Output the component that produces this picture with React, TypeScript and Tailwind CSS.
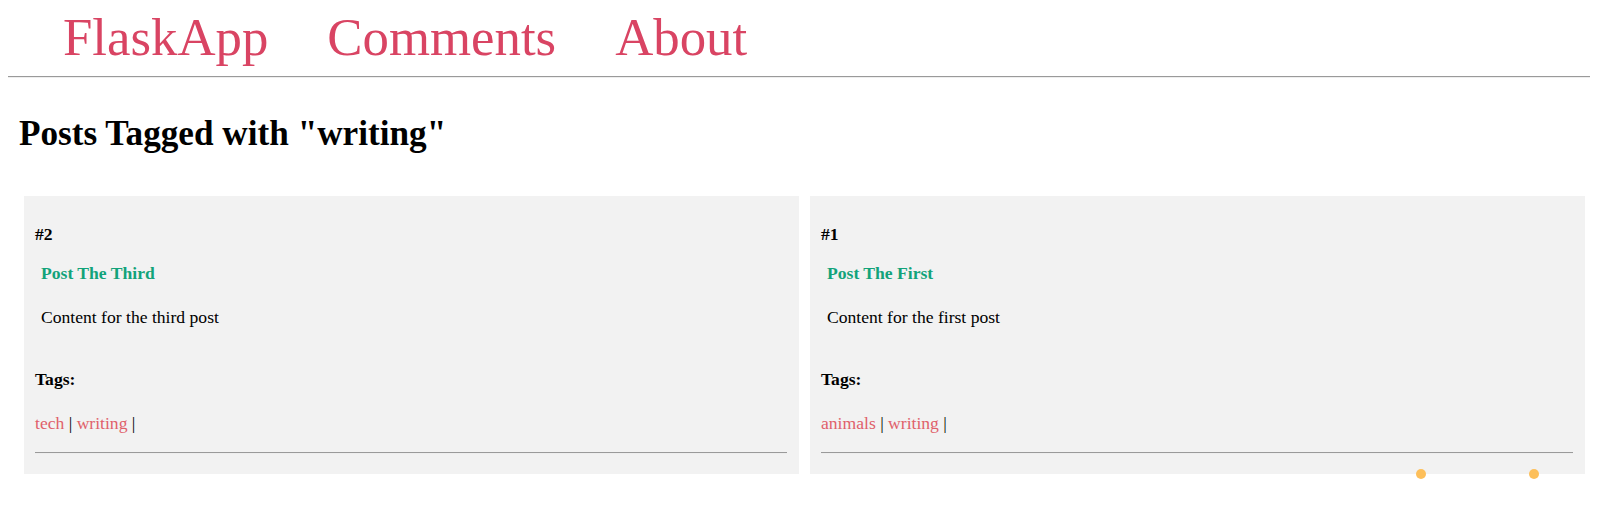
import React from "react";

type Post = { id: number; title: string; content: string; tags: string[] };

const posts: Post[] = [
  { id: 2, title: "Post The Third", content: "Content for the third post", tags: ["tech", "writing"] },
  { id: 1, title: "Post The First", content: "Content for the first post", tags: ["animals", "writing"] },
];

function Card({ post }: { post: Post }) {
  return (
    <div className="w-[775px] bg-[#f2f2f2] pl-[11px] pr-[12px] pt-[28px] pb-[20px] text-[17.6px] leading-[20px] text-black">
      <h4 className="font-bold">#{post.id}</h4>
      <p className="mt-[19px] ml-[6px] font-bold text-[#12a37a]">{post.title}</p>
      <p className="mt-[24px] ml-[6px]">{post.content}</p>
      <h4 className="mt-[42px] font-bold">Tags:</h4>
      <p className="mt-[24px]">
        {post.tags.map((t) => (
          <React.Fragment key={t}>
            <a className="text-[#e0606a]">{t}</a> |{" "}
          </React.Fragment>
        ))}
      </p>
      <div className="mt-[19px] border-t border-t-[#9a9a9a] border-b border-b-[#eeeeee]" />
    </div>
  );
}

export default function App() {
  return (
    <div className="relative min-h-[527px] bg-white font-['Liberation_Serif',serif] text-black">
      <nav className="flex h-[76px] gap-[59px] pl-[63px] pt-[7px] text-[52.8px] leading-[61px] text-[#d94463]">
        <a>FlaskApp</a>
        <a>Comments</a>
        <a>About</a>
      </nav>
      <div className="mx-[8px] border-t border-t-[#9a9a9a] border-b border-b-[#eeeeee]" />
      <h1 className="mt-[36px] pl-[19px] text-[35.2px] font-bold leading-[40px]">
        Posts Tagged with "writing"
      </h1>
      <div className="mt-[42px] flex gap-[11px] pl-[24px]">
        {posts.map((p) => (
          <Card key={p.id} post={p} />
        ))}
      </div>
      <span className="absolute left-[1416px] top-[469px] h-[10px] w-[10px] rounded-full bg-[#fdbf5a]" />
      <span className="absolute left-[1529px] top-[469px] h-[10px] w-[10px] rounded-full bg-[#fdbf5a]" />
    </div>
  );
}
